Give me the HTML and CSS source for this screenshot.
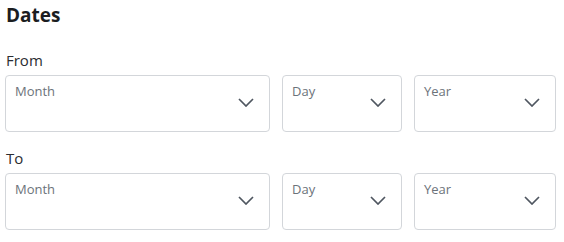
FILE: index.html
```html
<!DOCTYPE html>
<html lang="en">
<head>
    <meta charset="UTF-8">
    <meta name="viewport" content="width=device-width, initial-scale=1.0">
    <title>Dates</title>
    <link rel="stylesheet" href="styles.css">
</head>
<body>
    <div class="dates">
        <h2 class="dates-title">Dates</h2>

        <div class="date-group">
            <div class="group-label">From</div>
            <div class="date-row">
                <div class="select-box">
                    <span class="select-label">Month</span>
                    <svg class="chevron" width="16" height="9" viewBox="0 0 16 9"><path d="M1 1 L8 8 L15 1" /></svg>
                </div>
                <div class="select-box">
                    <span class="select-label">Day</span>
                    <svg class="chevron" width="16" height="9" viewBox="0 0 16 9"><path d="M1 1 L8 8 L15 1" /></svg>
                </div>
                <div class="select-box">
                    <span class="select-label">Year</span>
                    <svg class="chevron" width="16" height="9" viewBox="0 0 16 9"><path d="M1 1 L8 8 L15 1" /></svg>
                </div>
            </div>
        </div>

        <div class="date-group">
            <div class="group-label">To</div>
            <div class="date-row">
                <div class="select-box">
                    <span class="select-label">Month</span>
                    <svg class="chevron" width="16" height="9" viewBox="0 0 16 9"><path d="M1 1 L8 8 L15 1" /></svg>
                </div>
                <div class="select-box">
                    <span class="select-label">Day</span>
                    <svg class="chevron" width="16" height="9" viewBox="0 0 16 9"><path d="M1 1 L8 8 L15 1" /></svg>
                </div>
                <div class="select-box">
                    <span class="select-label">Year</span>
                    <svg class="chevron" width="16" height="9" viewBox="0 0 16 9"><path d="M1 1 L8 8 L15 1" /></svg>
                </div>
            </div>
        </div>
    </div>
</body>
</html>
```

FILE: styles.css
```css
body {
    margin: 0;
    padding: 0;
    background: #ffffff;
    font-family: 'Open Sans', 'Noto Sans', sans-serif;
}
.dates {
    width: 551px;
    padding: 3px 0 0 5px;
}
.dates-title {
    margin: 0 0 23px 1px;
    font-size: 19px;
    line-height: 24px;
    font-weight: 700;
    color: #1b1d21;
}
.date-group {
    margin-bottom: 16px;
}
.group-label {
    font-size: 15px;
    line-height: 20px;
    color: #2b2d31;
    margin: 0 0 5px 1px;
}
.date-row {
    display: grid;
    grid-template-columns: 265px 120px 142px;
    gap: 12px;
}
.select-box {
    display: flex;
    justify-content: space-between;
    align-items: flex-start;
    height: 57px;
    box-sizing: border-box;
    padding: 6px 15px 0 9px;
    border: 1px solid #d3d6da;
    border-radius: 4px;
}
.select-label {
    font-size: 13px;
    line-height: 18px;
    color: #6c737a;
}
.chevron {
    margin-top: 16px;
    fill: none;
    stroke: #4f5660;
    stroke-width: 1.7;
}
```
